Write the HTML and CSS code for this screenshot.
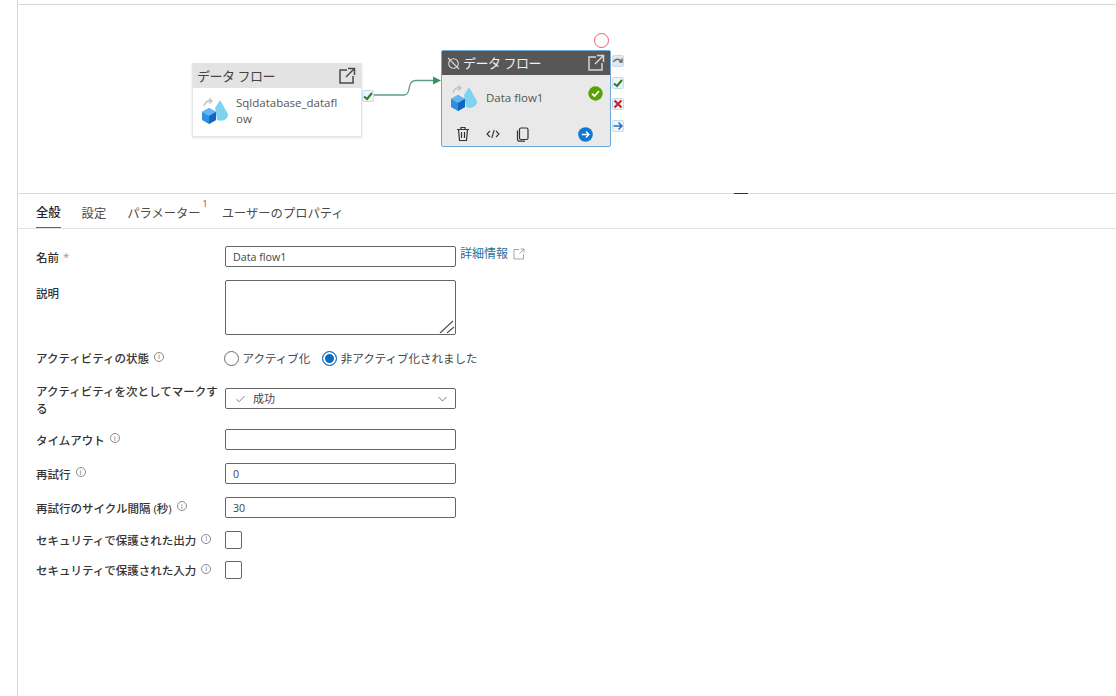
FILE: index.html
```html
<!DOCTYPE html>
<html lang="ja">
<head>
<meta charset="utf-8">
<title>データ フロー</title>
<link rel="stylesheet" href="styles.css">
</head>
<body>
<div class="page">
  <section class="canvas">
    <svg class="link" width="90" height="40" viewBox="0 0 90 40">
      <path d="M5 17H36C44 17 38 2.500 48 2.500H66" fill="none" stroke="#5f9e83" stroke-width="1.300"/>
      <path d="M65 -1.500L73 2.500L65 6.500Z" fill="#3f8f5f"/>
    </svg>

    <div class="node node-plain">
      <div class="node-head"><span>データ フロー</span>
        <svg class="open" width="18" height="18" viewBox="0 0 18 18"><path d="M9 3H2V16H15V9M8 10L16 2M10 1.500H16.500V8" fill="none" stroke="#4a4a4a" stroke-width="1.500"/></svg>
      </div>
      <div class="node-body">
        <svg class="flow" width="28" height="28" viewBox="0 0 28 28"><path d="M19 3L27 17C27 23 21 25 16 23L14 11Z" fill="#7fd3ee"/><path d="M1 15L8 11L15 15V23L8 27L1 23Z" fill="#2f8fe0"/><path d="M1 15L8 11L15 15L8 19Z" fill="#62b6f2"/><path d="M8 19L15 15V23L8 27Z" fill="#1565c0"/><path d="M3 9C4 5 7 3 10 4M8 1.500L11 4L8 6.500" fill="none" stroke="#c0c0c0" stroke-width="1.400"/></svg>
        <span class="node-name">Sqldatabase_dataflow</span>
      </div>
    </div>
    <span class="port port-out"><svg width="10" height="10" viewBox="0 0 10 10"><path d="M1 5.500L4 8L9 2" fill="none" stroke="#2e7d1e" stroke-width="2"/></svg></span>

    <div class="node node-active">
      <div class="node-head"><svg width="13" height="13" viewBox="0 0 13 13"><circle cx="6.500" cy="6.500" r="4.800" fill="none" stroke="#d8d8d8" stroke-width="1.100"/><path d="M1 1L12 12" stroke="#d8d8d8" stroke-width="1.100"/></svg><span>データ フロー</span>
        <svg class="open" width="18" height="18" viewBox="0 0 18 18"><path d="M9 3H2V16H15V9M8 10L16 2M10 1.500H16.500V8" fill="none" stroke="#d6d6d6" stroke-width="1.500"/></svg>
      </div>
      <div class="node-body">
        <svg class="flow" width="28" height="28" viewBox="0 0 28 28"><path d="M19 3L27 17C27 23 21 25 16 23L14 11Z" fill="#7fd3ee"/><path d="M1 15L8 11L15 15V23L8 27L1 23Z" fill="#2f8fe0"/><path d="M1 15L8 11L15 15L8 19Z" fill="#62b6f2"/><path d="M8 19L15 15V23L8 27Z" fill="#1565c0"/><path d="M3 9C4 5 7 3 10 4M8 1.500L11 4L8 6.500" fill="none" stroke="#c0c0c0" stroke-width="1.400"/></svg>
        <span class="node-name">Data flow1</span>
        <svg class="status" width="15" height="15" viewBox="0 0 15 15"><circle cx="7.500" cy="7.500" r="7.200" fill="#57a300"/><path d="M4 7.800L6.500 10L11 5" fill="none" stroke="#fff" stroke-width="1.800"/></svg>
      </div>
      <div class="node-tools">
        <svg width="14" height="16" viewBox="0 0 14 16"><path d="M1 3.500H13M5 3V1.500H9V3M2.500 3.500L3.500 14.500H10.500L11.500 3.500M5.500 6V12M8.500 6V12" fill="none" stroke="#333" stroke-width="1.200"/></svg>
        <svg width="14" height="10" viewBox="0 0 14 10"><path d="M4 2L1 5L4 8M10 2L13 5L10 8M8.200 1L5.800 9" fill="none" stroke="#333" stroke-width="1.100"/></svg>
        <svg class="copy" width="13" height="15" viewBox="0 0 13 15"><rect x="3.500" y="1" width="8.500" height="11.500" rx="1.500" fill="none" stroke="#333" stroke-width="1.200"/><path d="M1.500 3.500V12.500C1.500 13.500 2.300 14.200 3 14.200H9" fill="none" stroke="#333" stroke-width="1.200"/></svg>
        <svg class="go" width="15" height="15" viewBox="0 0 15 15"><circle cx="7.500" cy="7.500" r="7.300" fill="#0f78d4"/><path d="M3.800 7.500H11M8 4.500L11 7.500L8 10.500" fill="none" stroke="#fff" stroke-width="1.300"/></svg>
      </div>
    </div>
    <span class="ring"></span>
    <div class="ports">
      <span class="port port-grey"><svg width="10" height="10" viewBox="0 0 10 10"><path d="M0.500 6C2 2.500 6 2.500 8 5M9 2.500V6H6" fill="none" stroke="#6b6b6b" stroke-width="1.400"/></svg></span>
      <span class="port"><svg width="10" height="10" viewBox="0 0 10 10"><path d="M1 5.500L4 8L9 2" fill="none" stroke="#2e7d1e" stroke-width="2"/></svg></span>
      <span class="port"><svg width="10" height="10" viewBox="0 0 10 10"><path d="M1.500 1.500L8.500 8.500M8.500 1.500L1.500 8.500" fill="none" stroke="#c4262e" stroke-width="2.200"/></svg></span>
      <span class="port"><svg width="10" height="10" viewBox="0 0 10 10"><path d="M0.500 5H9M5.500 1.500L9 5L5.500 8.500" fill="none" stroke="#2a6fc4" stroke-width="1.500"/></svg></span>
    </div>
    <span class="splitter"></span>
  </section>

  <nav class="tabs">
    <span class="tab tab-on">全般</span>
    <span class="tab">設定</span>
    <span class="tab">パラメーター<sup class="badge">1</sup></span>
    <span class="tab">ユーザーのプロパティ</span>
  </nav>

  <form class="form">
    <div class="row r-name">
      <label class="lab">名前 <i class="req">*</i></label>
      <div class="ctl"><div class="input">Data flow1</div>
        <a class="more">詳細情報<svg width="12" height="12" viewBox="0 0 12 12"><path d="M6 1.500H1V11H10.500V6.500M7.500 1H11V4.500M11 1L6.500 5.500" fill="none" stroke="#9a9a9a" stroke-width="0.900"/></svg></a>
      </div>
    </div>
    <div class="row r-desc">
      <label class="lab">説明</label>
      <div class="ctl"><div class="input area"><svg class="grip" width="16" height="14" viewBox="0 0 16 14"><path d="M1 13L14 1M8 13L15 7" fill="none" stroke="#555" stroke-width="1.200"/></svg></div></div>
    </div>
    <div class="row r-state">
      <label class="lab">アクティビティの状態<i class="info">i</i></label>
      <div class="ctl radios">
        <span class="radio"><i class="dot"></i>アクティブ化</span>
        <span class="radio"><i class="dot dot-on"></i>非アクティブ化されました</span>
      </div>
    </div>
    <div class="row r-mark">
      <label class="lab lab-wrap">アクティビティを次としてマークする</label>
      <div class="ctl"><div class="input select">
        <svg width="9" height="8" viewBox="0 0 10 8"><path d="M0.500 4.500L3.500 7L9.500 0.800" fill="none" stroke="#666" stroke-width="0.900"/></svg>
        <span class="sel-text">成功</span>
        <svg class="chev" width="9" height="6" viewBox="0 0 9 6"><path d="M0.500 1L4.500 5L8.500 1" fill="none" stroke="#666" stroke-width="0.900"/></svg>
      </div></div>
    </div>
    <div class="row r-std">
      <label class="lab">タイムアウト<i class="info">i</i></label>
      <div class="ctl"><div class="input"></div></div>
    </div>
    <div class="row r-std">
      <label class="lab">再試行<i class="info">i</i></label>
      <div class="ctl"><div class="input">0</div></div>
    </div>
    <div class="row r-std">
      <label class="lab">再試行のサイクル間隔 (秒)<i class="info">i</i></label>
      <div class="ctl"><div class="input">30</div></div>
    </div>
    <div class="row r-check">
      <label class="lab">セキュリティで保護された出力<i class="info">i</i></label>
      <div class="ctl"><span class="check"></span></div>
    </div>
    <div class="row r-check">
      <label class="lab">セキュリティで保護された入力<i class="info">i</i></label>
      <div class="ctl"><span class="check"></span></div>
    </div>
  </form>
</div>
</body>
</html>
```

FILE: styles.css
```css
* { box-sizing: border-box; }
html, body { margin: 0; height: 100%; background: #fff; overflow: hidden; }
body {
  font-family: "Open Sans", "Noto Sans CJK JP", sans-serif;
  font-size: 12px;
  color: #323130;
}
.page {
  margin-left: 17px;
  height: 696px;
  padding-top: 4px;
  border-left: 1px solid #d6d6d6;
}

/* canvas */
.canvas {
  position: relative;
  height: 190px;
  border-top: 1px solid #d9d9d9;
  border-bottom: 1px solid #d9d9d9;
}
.node {
  position: absolute;
  width: 170px;
  background: #fff;
}
.node-plain {
  left: 174px; top: 58px; height: 74px;
  border: 1px solid #e6e6e6;
  box-shadow: 0 1px 2px rgba(0,0,0,.12);
}
.node-active {
  left: 423px; top: 45px; height: 97px;
  background: #e9e9e9;
  border: 1px solid #6fa9d8;
  border-radius: 2px;
}
.node-head {
  display: flex; align-items: center;
  height: 24px; padding: 0 5px 2px 4px;
  font-size: 13px; letter-spacing: -.5px; color: #444;
  background: #e3e3e3;
}
.node-head span { flex: 1; }
.node-head svg { position: relative; top: 1px; }
.node-active .node-head { background: #575757; color: #eee; gap: 3px; padding-left: 5px; }
.node-body {
  display: flex; align-items: center; gap: 7px;
  height: 48px; padding: 0 7px 2px 8px;
  font-size: 11.500px; color: #555;
}
.node-name { width: 105px; word-break: break-all; line-height: 16px; }
.node-active .node-name { flex: 1; width: auto; }
.node-active .node-body { height: 47px; gap: 8px; }
.status { position: relative; top: -4px; }
.node-tools {
  display: flex; align-items: center; gap: 16px;
  height: 24px; padding: 0 0 0 14px;
}
.node-tools .go { margin-left: 33px; }

.link { position: absolute; left: 350px; top: 73px; overflow: visible; }
.ring {
  position: absolute; left: 576px; top: 28px;
  width: 15px; height: 15px;
  border: 1.500px solid #e8606a; border-radius: 50%;
}
.port {
  display: flex; align-items: center; justify-content: center;
  width: 12px; height: 12px;
  background: #eef4fa;
  border: 1px solid #c4dcf0; border-radius: 2px;
}
.port-grey { background: #e4e8ec; }
.port-out { position: absolute; left: 344px; top: 85px; }
.ports {
  position: absolute; left: 594px; top: 50px;
  display: flex; flex-direction: column; gap: 9.500px;
}
.splitter {
  position: absolute; left: 716px; bottom: -1px;
  width: 14px; height: 1px; background: #333;
}

/* tabs */
.tabs {
  display: flex; align-items: stretch; gap: 21px;
  height: 35px; padding-left: 18px;
  border-bottom: 1px solid #e3e3e3;
  font-size: 12.300px;
}
.tab { display: flex; align-items: center; padding-top: 3px; color: #4a4a4a; position: relative; }
.tab-on { color: #252525; font-weight: 500; border-bottom: 1px solid #1b76c4; }
.badge {
  position: absolute; right: -7px; top: 5px;
  font-size: 9px; line-height: 10px; color: #c0303e;
}

/* form */
.form { padding: 17px 0 0 18px; }
.row {
  display: grid;
  grid-template-columns: 189px 231px;
  align-items: center;
}
.r-name { height: 21px; margin-bottom: 13px; }
.r-desc { height: 55px; margin-bottom: 13px; align-items: start; }
.r-desc .lab { margin-top: 5px; }
.r-state { height: 20px; margin-bottom: 20px; }
.r-mark { height: 21px; margin-bottom: 20px; grid-template-rows: 21px; align-items: start; }
.r-std { height: 21px; margin-bottom: 13px; }
.r-check { height: 18px; margin-bottom: 12px; }

.lab { font-weight: 500; font-size: 11.500px; color: #333; white-space: nowrap; display: flex; align-items: center; }
.lab-wrap { white-space: normal; width: 185px; margin-top: -5px; line-height: 17px; display: block; }
.req { font-style: normal; color: #d0808a; margin-left: 4px; }
.info {
  display: inline-flex; align-items: center; justify-content: center;
  width: 10px; height: 10px; margin: -3px 0 0 5px;
  border: 1px solid #8a8a8a; border-radius: 50%;
  font: normal 7px/1 "Liberation Sans", sans-serif; color: #777;
}
.ctl { position: relative; display: flex; align-items: center; }
.input {
  width: 231px; height: 21px; flex: none;
  display: flex; align-items: center;
  padding: 0 7px;
  border: 1px solid #656565; border-radius: 2px;
  font-size: 10.700px; color: #444;
  background: #fff;
}
.area { height: 55px; position: relative; }
.grip { position: absolute; right: 0; bottom: 0; }
.more {
  position: absolute; left: 235px; top: 1px;
  display: flex; align-items: center; gap: 5px;
  font-size: 12px; color: #2a6f9e; white-space: nowrap;
  line-height: 14px;
}
.radios { gap: 12px; margin-left: -1px; white-space: nowrap; font-size: 11.500px; color: #444; }
.radio { display: flex; align-items: center; gap: 3.500px; }
.dot {
  width: 15px; height: 15px; border-radius: 50%;
  border: 1px solid #6a6a6a; background: #fff; flex: none;
}
.dot-on { border: 1.500px solid #0f6cbd; box-shadow: inset 0 0 0 2px #fff; background: #0f6cbd; }
.select { padding: 0 8px 0 10px; }
.sel-text { margin: -2px 0 0 8px; flex: 1; font-size: 11px; }
.check {
  width: 17px; height: 18px;
  border: 1px solid #656565; border-radius: 2px; background: #fff;
}
```
